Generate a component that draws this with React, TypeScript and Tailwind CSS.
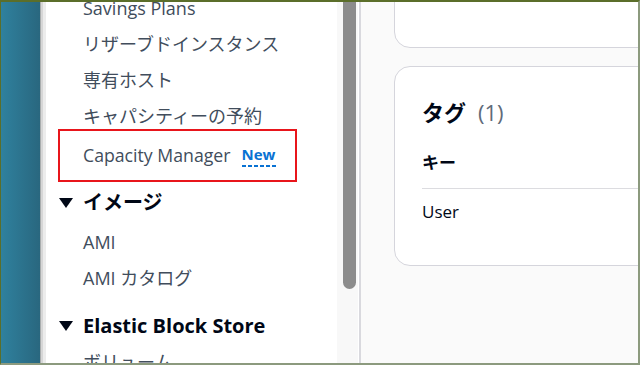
import React from 'react'

const font = { fontFamily: '"Open Sans", "Noto Sans CJK JP", sans-serif' }

function Caret() {
  return (
    <svg width="14" height="10" viewBox="0 0 14 10" className="shrink-0">
      <polygon points="0,0 14,0 7,10" fill="#000716" />
    </svg>
  )
}

function NavItem({ label, h = 'h-9' }: { label: string; h?: string }) {
  return (
    <div className={`flex items-center whitespace-nowrap pl-[37px] text-[18px] text-[#414d5c] ${h}`}>{label}</div>
  )
}

function NavHeading({ label, h }: { label: string; h: string }) {
  return (
    <div className={`flex items-center gap-[10px] whitespace-nowrap pl-[13px] text-[20px] font-bold text-[#000716] ${h}`}>
      <Caret />
      <span>{label}</span>
    </div>
  )
}

export default function App() {
  return (
    <div
      className="flex h-[365px] w-[640px] overflow-hidden border-t-2 border-l border-r-2 border-b-2 border-t-[#5b6e2a] border-l-[#5b6e2a] border-r-[#8c9a7e] border-b-[#8c9a7e]"
      style={font}
    >
      {/* left teal strip */}
      <div className="w-[39px] shrink-0 bg-gradient-to-r from-[#2f819e] to-[#29677f]" />
      <div className="w-px shrink-0 bg-[#a9adae]" />
      <div className="w-[2px] shrink-0 bg-[#d6d6d6]" />
      <div className="w-[3px] shrink-0 bg-[#ececec]" />

      {/* sidebar */}
      <div className="flex w-[312px] shrink-0 bg-white">
        <div className="flex-1 overflow-hidden">
          <div className="-mt-[12px] flex flex-col">
            <NavItem label="Savings Plans" />
            <NavItem label="リザーブドインスタンス" />
            <NavItem label="専有ホスト" />
            <NavItem label="キャパシティーの予約" />
            <div className="-mt-[5px] ml-[12px] flex h-[53px] w-[239px] items-center border-2 border-[#e8151b] pl-[23px]">
              <span className="whitespace-nowrap text-[17.7px] text-[#414d5c]">Capacity Manager</span>
              <span className="ml-[11px] flex flex-col text-[15px] font-bold leading-[18px] text-[#0972d3]">
                New
                <svg width="34" height="2" className="mt-[2px]">
                  <line x1="0" y1="1" x2="34" y2="1" stroke="#0972d3" strokeWidth="2" strokeDasharray="4 2" />
                </svg>
              </span>
            </div>
            <NavHeading label="イメージ" h="h-[42px]" />
            <NavItem label="AMI" />
            <NavItem label="AMI カタログ" />
            <div className="mt-[12px]">
              <NavHeading label="Elastic Block Store" h="h-9" />
            </div>
            <NavItem label="ボリューム" />
          </div>
        </div>
        {/* scrollbar */}
        <div className="w-[21px] shrink-0 bg-[#f8f8f8] pl-[6px] pr-[2px]">
          <div className="-mt-[10px] h-[297px] w-[13px] rounded-full bg-[#8c8c8c]" />
        </div>
      </div>
      <div className="w-px shrink-0 bg-white" />
      <div className="w-[2px] shrink-0 bg-[#d9d9de]" />

      {/* main */}
      <div className="flex-1 overflow-hidden bg-[#fafafa] pl-[33px]">
        <div className="-mt-[40px] h-[86px] w-[400px] rounded-[16px] border border-[#d5d5dc] bg-white" />
        <div className="mt-[18px] h-[200px] w-[400px] rounded-[16px] border border-[#d5d5dc] bg-white pl-[27px] pt-[31px]">
          <div className="flex h-[28px] items-center gap-[12px] text-[22px]">
            <span className="font-bold text-[#000716]">タグ</span>
            <span className="text-[#5f6b7a]">(1)</span>
          </div>
          <div className="mt-[26px] flex h-[22px] items-center text-[17px] font-bold text-[#000716]">キー</div>
          <div className="mt-[14px] h-px bg-[#dcdce0]" />
          <div className="mt-[12px] flex h-[22px] items-center text-[17px] text-[#000716]">User</div>
        </div>
      </div>
    </div>
  )
}
